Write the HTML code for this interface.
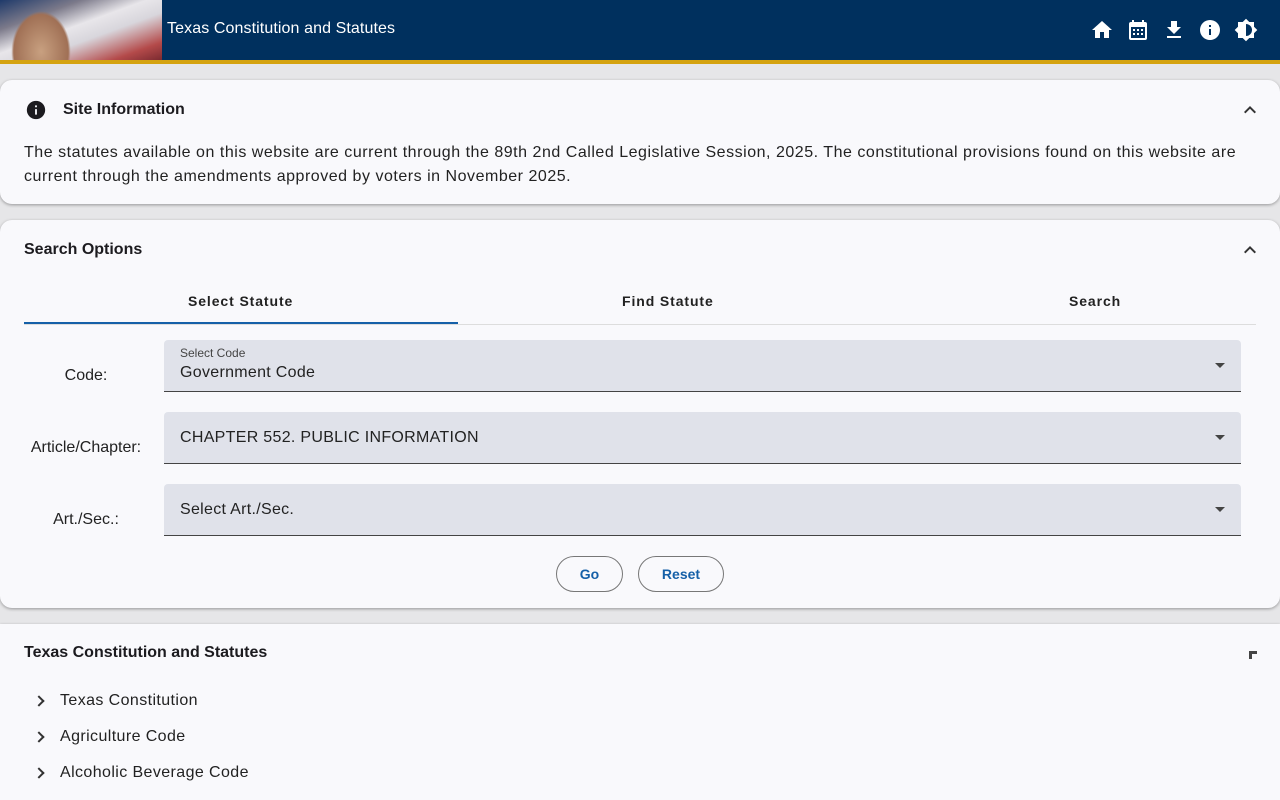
<!DOCTYPE html>
<html><head><meta charset="utf-8"><style>
*{box-sizing:border-box;margin:0;padding:0}
html,body{width:1280px;height:800px;overflow:hidden}
body{position:relative;background:#e6e6e8;font-family:"Liberation Sans",Roboto,sans-serif;color:#1c1b1f}
.hdr{position:absolute;left:0;top:0;width:1280px;height:60px;background:#00305e}
.gold{position:absolute;left:0;top:60px;width:1280px;height:4px;background:#d4a20f}
.logo{position:absolute;left:0;top:0;width:162px;height:60px;background:linear-gradient(160deg,#1f3a6a 0%,#7c7a8a 25%,#e8e6ea 45%,#d8d6dc 60%,#b44a4a 85%,#7b2a30 100%)}
.dome{position:absolute;left:6px;top:4px;width:70px;height:56px;background:radial-gradient(ellipse at 50% 85%,#c8a080 0%,#a07055 55%,transparent 60%)}
.ttl{position:absolute;left:167px;top:20px;color:#fff;font-size:16px;letter-spacing:.1px}
.icons{position:absolute;right:22px;top:18px;display:flex;gap:12px}
.icons svg{width:24px;height:24px;fill:#fff}
.card{position:absolute;left:0;width:1280px;background:#f9f9fc;border-radius:12px;box-shadow:0 1px 3px rgba(0,0,0,.35)}
.h{font-size:16px;font-weight:bold;position:absolute}
.chev{position:absolute;right:18px;width:24px;height:24px}
.tab{position:absolute;top:293px;font-size:14px;font-weight:bold;letter-spacing:.9px;color:#222}
.lbl{position:absolute;font-size:16px;color:#222;text-align:center;width:140px;left:16px}
.sel{position:absolute;left:164px;width:1077px;height:52px;background:#e0e2ea;border-bottom:1px solid #444;border-radius:4px 4px 0 0}
.sel .v{position:absolute;left:16px;font-size:16px;color:#222;letter-spacing:.3px}
.sel .a{position:absolute;right:16px;top:23px;border-left:5px solid transparent;border-right:5px solid transparent;border-top:5px solid #444}
.btn{position:absolute;top:556px;height:36px;border:1px solid #777;border-radius:18px;color:#1560a8;font-size:14px;font-weight:bold;text-align:center;line-height:34px}
.li{position:absolute;left:60px;font-size:16px;letter-spacing:.4px;color:#222}
.ar{position:absolute;left:35px;width:8px;height:8px;border-right:2px solid #333;border-top:2px solid #333;transform:rotate(45deg)}
</style></head><body>
<div class="hdr"><div class="logo"><div class="dome"></div></div><div class="ttl">Texas Constitution and Statutes</div>
<div class="icons">
<svg viewBox="0 0 24 24"><path d="M10 20v-6h4v6h5v-8h3L12 3 2 12h3v8z"/></svg>
<svg viewBox="0 0 24 24"><path d="M19 4h-1V2h-2v2H8V2H6v2H5a2 2 0 0 0-2 2v14a2 2 0 0 0 2 2h14a2 2 0 0 0 2-2V6a2 2 0 0 0-2-2zm0 16H5V9h14zM7 11h2v2H7zm4 0h2v2h-2zm4 0h2v2h-2zM7 15h2v2H7zm4 0h2v2h-2zm4 0h2v2h-2z"/></svg>
<svg viewBox="0 0 24 24"><path d="M19 9h-4V3H9v6H5l7 7 7-7zM5 18v2h14v-2z"/></svg>
<svg viewBox="0 0 24 24"><path d="M12 2a10 10 0 1 0 0 20 10 10 0 0 0 0-20zm1 15h-2v-6h2zm0-8h-2V7h2z"/></svg>
<svg viewBox="0 0 24 24"><path d="M20 8.69V4h-4.69L12 .69 8.69 4H4v4.69L.69 12 4 15.31V20h4.69L12 23.31 15.31 20H20v-4.69L23.31 12zM12 18V6a6 6 0 0 1 0 12z"/></svg>
</div></div>
<div class="gold"></div>

<div class="card" style="top:80px;height:124px">
<svg style="position:absolute;left:25px;top:99px;top:19px" width="22" height="22" viewBox="0 0 24 24"><path fill="#1c1b1f" d="M12 2a10 10 0 1 0 0 20 10 10 0 0 0 0-20zm1 15h-2v-6h2zm0-8h-2V7h2z"/></svg>
<div class="h" style="left:63px;top:21px">Site Information</div>
<svg class="chev" style="top:18px" viewBox="0 0 24 24"><path d="M7.4 15.4 12 10.8l4.6 4.6L18 14l-6-6-6 6z" fill="#333"/></svg>
<div style="position:absolute;left:24px;top:61px;width:1235px;font-size:16px;line-height:24px;letter-spacing:.52px;color:#222">The statutes available on this website are current through the 89th 2nd Called Legislative Session, 2025. The constitutional provisions found on this website are current through the amendments approved by voters in November 2025.</div>
</div>

<div class="card" style="top:220px;height:388px">
<div class="h" style="left:24px;top:21px">Search Options</div>
<svg class="chev" style="top:18px" viewBox="0 0 24 24"><path d="M7.4 15.4 12 10.8l4.6 4.6L18 14l-6-6-6 6z" fill="#333"/></svg>
</div>
<div class="tab" style="left:188px">Select Statute</div>
<div class="tab" style="left:622px">Find Statute</div>
<div class="tab" style="left:1069px">Search</div>
<div style="position:absolute;left:24px;top:324px;width:1232px;height:1px;background:#ddd"></div>
<div style="position:absolute;left:24px;top:322px;width:434px;height:2px;background:#1560a8"></div>
<div class="lbl" style="top:367px">Code:</div>
<div class="sel" style="top:340px"><div style="position:absolute;left:16px;top:6px;font-size:12px;color:#444">Select Code</div><div class="v" style="top:24px">Government Code</div><div class="a"></div></div>
<div class="lbl" style="top:439px">Article/Chapter:</div>
<div class="sel" style="top:412px"><div class="v" style="top:17px">CHAPTER 552. PUBLIC INFORMATION</div><div class="a"></div></div>
<div class="lbl" style="top:511px">Art./Sec.:</div>
<div class="sel" style="top:484px"><div class="v" style="top:17px">Select Art./Sec.</div><div class="a"></div></div>
<div class="btn" style="left:556px;width:67px">Go</div>
<div class="btn" style="left:638px;width:86px">Reset</div>

<div class="card" style="top:624px;height:176px;border-radius:0">
<div class="h" style="left:24px;top:20px">Texas Constitution and Statutes</div>
<div style="position:absolute;left:1249px;top:27px;width:8px;height:8px;border-left:3px solid #444;border-top:3px solid #444"></div>
</div>
<div class="ar" style="top:697px"></div><div class="li" style="top:692px">Texas Constitution</div>
<div class="ar" style="top:733px"></div><div class="li" style="top:728px">Agriculture Code</div>
<div class="ar" style="top:769px"></div><div class="li" style="top:764px">Alcoholic Beverage Code</div>
</body></html>
